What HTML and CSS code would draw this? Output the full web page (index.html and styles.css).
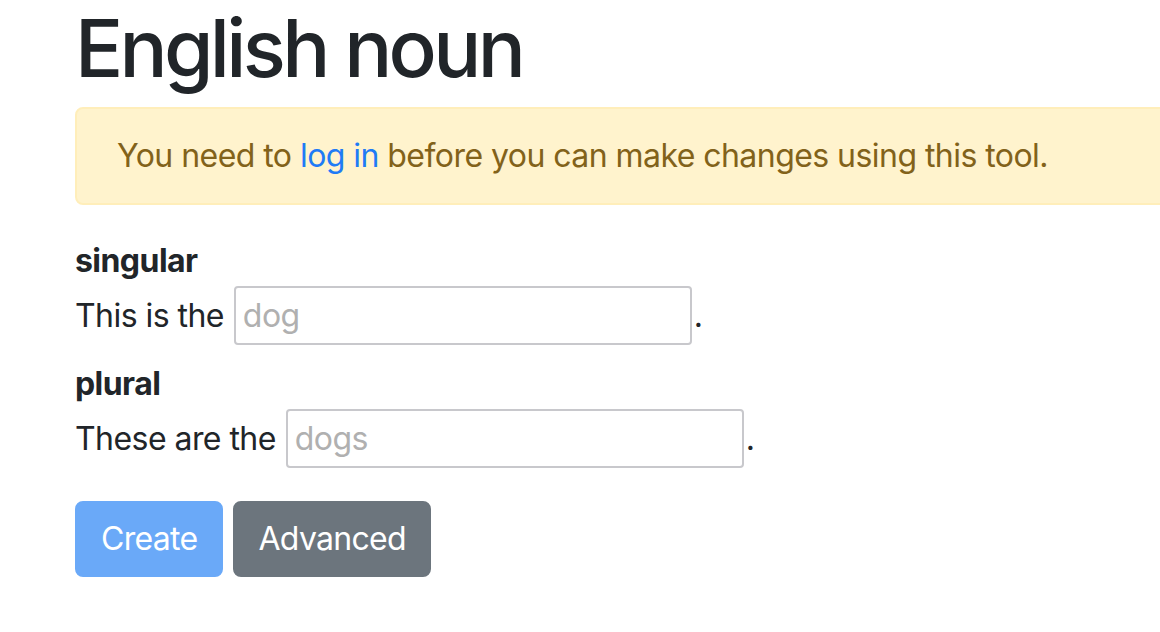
FILE: index.html
```html
<!DOCTYPE html>
<html lang="en">

<head>
  <meta charset="UTF-8">
  <meta name="viewport" content="width=device-width, initial-scale=1.0">
  <title>English noun</title>
  <link rel="stylesheet" href="styles.css">
</head>

<body>
  <div class="container">
    <h1>English noun</h1>

    <div class="alert">
      You need to <a href="#">log in</a> before you can make changes using this tool.
    </div>

    <form id="nounForm">
      <div class="field">
        <label for="singular">singular</label>
        <div class="sentence">
          <span class="lead">This is the</span>
          <input type="text" id="singular" placeholder="dog">
          <span>.</span>
        </div>
      </div>

      <div class="field">
        <label for="plural">plural</label>
        <div class="sentence">
          <span class="lead">These are the</span>
          <input type="text" id="plural" placeholder="dogs">
          <span>.</span>
        </div>
      </div>

      <div class="actions">
        <button type="submit" class="btn btn-primary" disabled>Create</button>
        <button type="button" class="btn btn-secondary">Advanced</button>
      </div>
    </form>
  </div>
</body>

</html>
```

FILE: styles.css
```css
/* Estilização Geral */
* {
  margin: 0;
  padding: 0;
  box-sizing: border-box;
}

body {
  font-family: Inter, "Noto Sans", sans-serif;
  font-size: 32px;
  line-height: 1.5;
  letter-spacing: -0.55px;
  color: #212529;
  background: #fff;
  overflow: hidden;
}

.container {
  width: 1400px;
  padding: 0 75px;
}

h1 {
  font-size: 80px;
  font-weight: 500;
  line-height: 1.2;
  margin-bottom: 11px;
  letter-spacing: -3.7px;
}

.alert {
  background-color: #fff3cd;
  border: 2px solid #ffeeba;
  border-radius: 8px;
  color: #82621a;
  padding: 23px 40px;
  margin-bottom: 32px;
}

.alert a {
  color: #1f7bf6;
  text-decoration: none;
}

.field {
  margin-bottom: 15px;
}

.field label {
  display: block;
  font-weight: 700;
  margin-bottom: 1px;
}

.sentence {
  display: flex;
  align-items: center;
}

.sentence .lead {
  margin-right: 10px;
}

.sentence input {
  width: 458px;
  height: 59px;
  padding: 0 7px;
  font-family: inherit;
  font-size: 32px;
  letter-spacing: -0.55px;
  color: #495057;
  border: 2px solid #c8c8cc;
  border-radius: 4px;
  margin-right: 2px;
}

.sentence input::placeholder {
  color: #b0b0b0;
}

.actions {
  display: flex;
  gap: 10px;
  margin-top: 33px;
}

.btn {
  font-family: inherit;
  font-size: 32px;
  line-height: 48px;
  letter-spacing: -0.7px;
  padding: 12px 24px;
  border: 2px solid transparent;
  border-radius: 8px;
  color: #fff;
}

.btn-primary {
  background-color: #6aa9f8;
  border-color: #6aa9f8;
}

.btn-secondary {
  background-color: #6c757d;
  border-color: #6c757d;
  padding: 12px 23px;
}
```
